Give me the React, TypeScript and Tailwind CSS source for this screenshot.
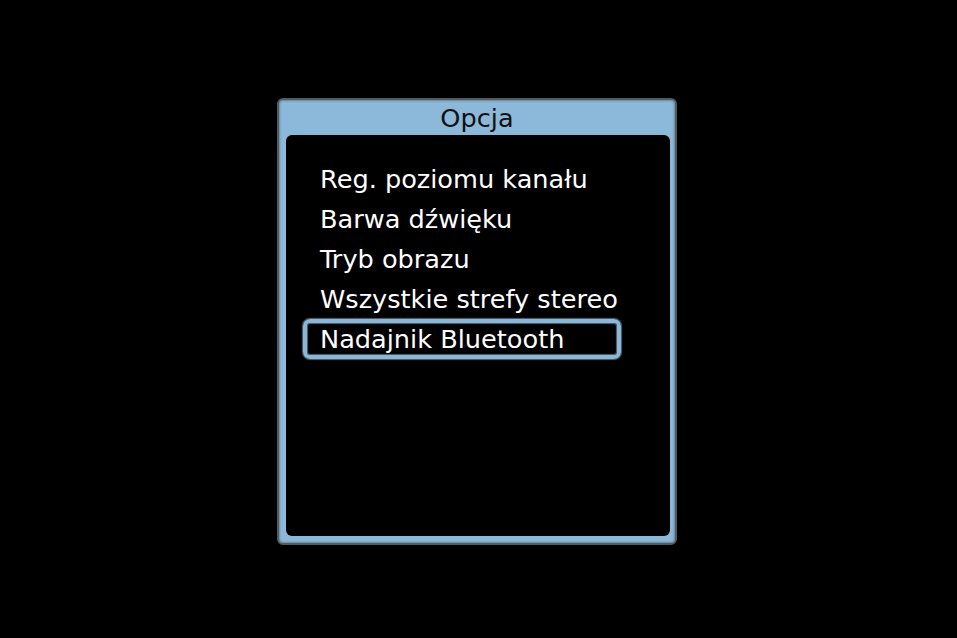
const items = [
  "Reg. poziomu kanału",
  "Barwa dźwięku",
  "Tryb obrazu",
  "Wszystkie strefy stereo",
  "Nadajnik Bluetooth",
];

const selected = 4;

export default function App() {
  return (
    <div
      className="w-[957px] h-[638px] bg-black pl-[277px] pt-[98px]"
      style={{ fontFamily: '"DejaVu Sans", "Liberation Sans", sans-serif' }}
    >
      <div className="w-[400px] h-[447px] rounded-[6px] bg-[#8cb9da] border-2 border-[#4f5b64] shadow-[inset_0_0_2px_1px_#6d8596] flex flex-col">
        <div className="h-[35px] leading-[37px] text-center text-[25.6px] text-[#111]">
          Opcja
        </div>

        <div className="h-[401px] ml-[7px] mr-[5px] rounded-[6px] bg-black pt-[24px] pl-[17px]">
          {items.map((label, i) => (
            <div
              key={label}
              className={
                i === selected
                  ? "w-[318px] h-[40px] leading-[32px] pl-[13px] rounded-[7px] border-4 border-[#8ab7d7] shadow-[0_0_1px_1px_#56636d,inset_0_0_1px_1px_#56636d] text-[25.6px] text-white"
                  : "w-[318px] h-[40px] leading-[40px] pl-[17px] text-[25.6px] text-white"
              }
            >
              {label}
            </div>
          ))}
        </div>
      </div>
    </div>
  );
}
